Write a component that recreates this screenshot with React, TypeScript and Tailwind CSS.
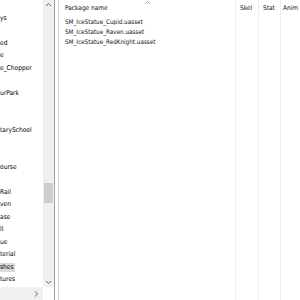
import React from 'react'

const treeRows: { text: string; selected?: boolean }[] = [
  { text: '' },
  { text: 'ys' },
  { text: '' },
  { text: 'ed' },
  { text: 'e' },
  { text: 'e_Chopper' },
  { text: '' },
  { text: 'urPark' },
  { text: '' },
  { text: '' },
  { text: 'tarySchool' },
  { text: '' },
  { text: '' },
  { text: 'ourse' },
  { text: '' },
  { text: 'Rail' },
  { text: 'ven' },
  { text: 'ase' },
  { text: 'll' },
  { text: 'ue' },
  { text: 'terial' },
  { text: 'shes', selected: true },
  { text: 'tures' },
]

const files = [
  'SM_IceStatue_Cupid.uasset',
  'SM_IceStatue_Raven.uasset',
  'SM_IceStatue_RedKnight.uasset',
]

function Chevron({ dir }: { dir: 'up' | 'down' | 'right' }) {
  const pts =
    dir === 'up' ? '1,4 3.5,1.5 6,4' : dir === 'down' ? '1,2 3.5,4.5 6,2' : '2,0.5 4.5,3 2,5.5'
  return (
    <svg width="7" height="6" viewBox="0 0 7 6">
      <polyline points={pts} fill="none" stroke="#606060" strokeWidth="1" />
    </svg>
  )
}

export default function App() {
  return (
    <div className="w-[300px] h-[300px] flex bg-white overflow-hidden font-['DejaVu_Sans_Condensed','Liberation_Sans',sans-serif] text-black">
      {/* left tree panel */}
      <div className="w-[55px] flex flex-col border-r border-[#a0a0a0] shrink-0">
        <div className="flex flex-1 min-h-0">
          <div className="w-[43px] flex flex-col overflow-hidden">
            {treeRows.map((r, i) => (
              <div key={i} className="h-[12.43px] flex items-center shrink-0">
                {r.text && (
                  <span
                    className={`text-[6.6px] leading-[9px] whitespace-nowrap ${
                      r.selected ? 'bg-[#d9d9d9] pr-[1px]' : ''
                    }`}
                  >
                    {r.text}
                  </span>
                )}
              </div>
            ))}
          </div>
          <div className="w-[11px] bg-[#f0f0f0] flex flex-col">
            <div className="h-[10px] flex items-center justify-center">
              <Chevron dir="up" />
            </div>
            <div className="flex-1">
              <div className="mt-[173px] h-[20px] mx-[1px] bg-[#cdcdcd]" />
            </div>
            <div className="h-[10px] flex items-center justify-center">
              <Chevron dir="down" />
            </div>
          </div>
        </div>
        <div className="h-[13px] flex">
          <div className="w-[43px] bg-[#f0f0f0] flex items-center justify-end pr-[3px]">
            <Chevron dir="right" />
          </div>
          <div className="flex-1 bg-white" />
        </div>
      </div>

      <div className="w-[3px] shrink-0" />

      {/* right list panel */}
      <div className="flex-1 flex border-l border-[#d5d5d5] text-[#111]">
        <div className="w-[176px] flex flex-col relative">
          <div className="h-[16px] flex items-center pl-[6px] text-[6.5px] leading-none">Package name</div>
          <svg className="absolute left-[85px] top-[0px]" width="7" height="5" viewBox="0 0 7 5">
            <polyline points="1,4 3.5,1.5 6,4" fill="none" stroke="#9a9a9a" strokeWidth="0.8" />
          </svg>
          <div className="mt-[1px] flex flex-col">
            {files.map((f) => (
              <div key={f} className="h-[10px] flex items-center pl-[6px] text-[6.3px] leading-none whitespace-nowrap">
                {f}
              </div>
            ))}
          </div>
        </div>
        <div className="w-[23px] border-l border-[#ededed] flex flex-col">
          <div className="h-[16px] flex items-center pl-[4px] text-[6.5px] leading-none">Skel</div>
        </div>
        <div className="w-[22px] border-l border-[#ededed] flex flex-col">
          <div className="h-[16px] flex items-center pl-[4px] text-[6.5px] leading-none">Stat</div>
        </div>
        <div className="flex-1 border-l border-[#ededed] flex flex-col">
          <div className="h-[16px] flex items-center pl-[2px] text-[6.5px] leading-none whitespace-nowrap">Anim</div>
        </div>
      </div>
    </div>
  )
}
